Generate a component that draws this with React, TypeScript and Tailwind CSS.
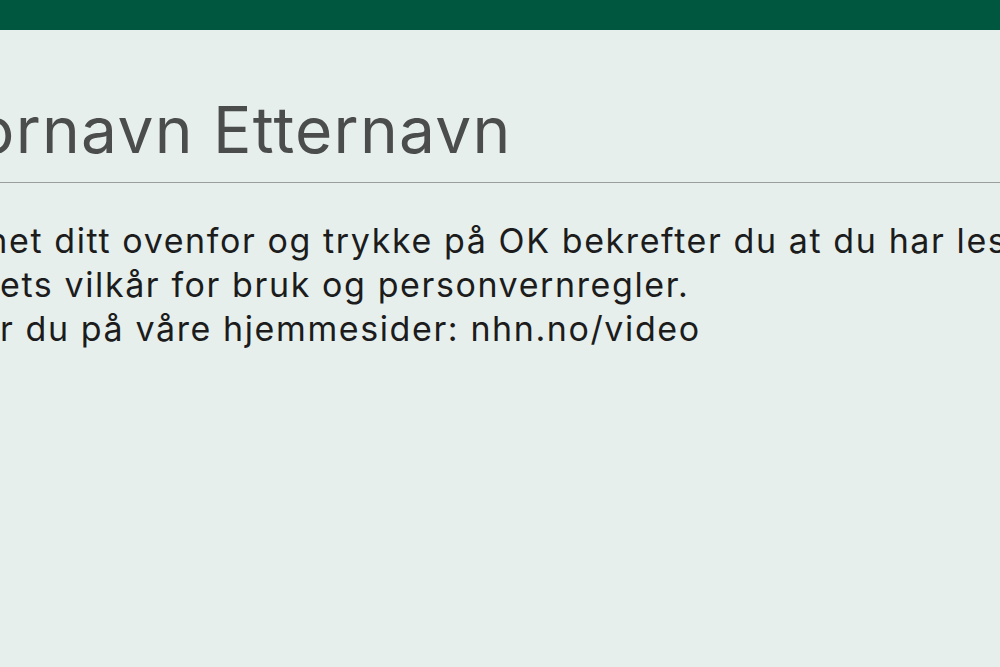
type ClippedLineProps = {
  hidden: string;
  text: string;
  className?: string;
};

// The screenshot is cropped on the left, so the start of each line sits
// outside the viewport. The hidden part is pushed left of the anchor.
function ClippedLine({ hidden, text, className }: ClippedLineProps) {
  return (
    <div className={`whitespace-nowrap ${className ?? ""}`}>
      <span className="inline-flex w-0 justify-end">{hidden}</span>
      {text}
    </div>
  );
}

export default function App() {
  return (
    <div className="min-h-screen w-full overflow-hidden bg-[#e6efec] font-['Inter',sans-serif]">
      {/* Top bar */}
      <div className="h-[30px] bg-[#00573f]" />

      <main className="pt-[66px]">
        {/* Name */}
        <div className="border-b border-[#9a9e9c] pb-[18px]">
          <ClippedLine
            hidden="F"
            text="ornavn Etternavn"
            className="-ml-[24px] text-[64px] leading-[68px] tracking-[0.02em] text-[#4b4d4c]"
          />
        </div>

        {/* Terms */}
        <div className="pt-[36px] text-[34px] leading-[44px] tracking-[0.047em] text-[#1c1c1c]">
          <ClippedLine
            hidden="Ved å skrive inn navn"
            text="et ditt ovenfor og trykke på OK bekrefter du at du har lest og godtatt"
            className="pl-[9px]"
          />
          <ClippedLine hidden="Norsk Helsenett" text="ets vilkår for bruk og personvernregler." />
          <ClippedLine hidden="Mer informasjon finne" text="r du på våre hjemmesider: nhn.no/video" />
        </div>
      </main>
    </div>
  );
}
